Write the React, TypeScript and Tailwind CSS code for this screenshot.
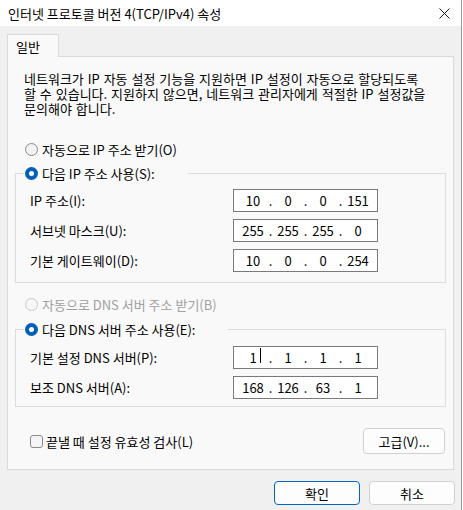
import React from "react";

function Radio({ checked, disabled }: { checked?: boolean; disabled?: boolean }) {
  if (checked) {
    return (
      <span className="flex h-[13px] w-[13px] shrink-0 items-center justify-center rounded-full bg-[#005fb8]">
        <span className="h-[5px] w-[5px] rounded-full bg-white" />
      </span>
    );
  }
  return (
    <span
      className={
        disabled
          ? "h-[13px] w-[13px] shrink-0 rounded-full border border-[#c8c8c8] bg-[#f7f7f7]"
          : "h-[13px] w-[13px] shrink-0 rounded-full border border-[#8a8a8a] bg-[#f3f3f3]"
      }
    />
  );
}

function IpField({ parts, caret }: { parts: string[]; caret?: boolean }) {
  return (
    <div className="flex h-[23px] w-[145px] items-center border border-[#7a7a7a] bg-white pl-[5px]">
      {parts.map((p, i) => (
        <React.Fragment key={i}>
          <span className="w-[28px] text-center">
            <span className="relative">
              {p}
              {caret && i === 0 && (
                <span className="absolute right-[-4px] top-[0px] h-[15px] w-px bg-black" />
              )}
            </span>
          </span>
          {i < 3 && <span className="w-[7px] text-center">.</span>}
        </React.Fragment>
      ))}
    </div>
  );
}

function Row({ label, parts, caret }: { label: string; parts: string[]; caret?: boolean }) {
  return (
    <div className="flex h-[23px] items-center">
      <span className="w-[217px] pl-[14px]">{label}</span>
      <IpField parts={parts} caret={caret} />
    </div>
  );
}

export default function App() {
  return (
    <div className="relative h-[510px] w-[463px] overflow-hidden bg-white font-['Noto_Sans_CJK_KR',sans-serif] text-[13px] leading-[15px] text-black">
      <div className="h-full w-[462px] border-r border-[#9a9a9a] bg-[#f0f0f0]">
        {/* title bar */}
        <div className="flex h-[26px] items-center justify-between bg-white pl-[8px] pr-[10px]">
          <span>인터넷 프로토콜 버전 4(TCP/IPv4) 속성</span>
          <svg width="11" height="11" viewBox="0 0 11 11" className="mr-[1px]">
            <path d="M0.5 0.5 L10.5 10.5 M10.5 0.5 L0.5 10.5" stroke="#1a1a1a" strokeWidth="1" fill="none" />
          </svg>
        </div>

        <div className="pt-[8px]">
          {/* tab */}
          <div className="relative z-10 mb-[-1px] ml-[7px] flex h-[23px] w-[52px] items-center border border-b-0 border-[#d9d9d9] bg-[#f9f9f9] pl-[8px]">
            일반
          </div>

          {/* panel */}
          <div className="ml-[7px] flex h-[414px] w-[447px] flex-col border border-[#d9d9d9] bg-[#f9f9f9]">
            <p className="pl-[16px] pt-[14px] [word-spacing:1px]">
              네트워크가 IP 자동 설정 기능을 지원하면 IP 설정이 자동으로 할당되도록
              <br />
              할 수 있습니다. 지원하지 않으면, 네트워크 관리자에게 적절한 IP 설정값을
              <br />
              문의해야 합니다.
            </p>

            <div className="mt-[25px] flex h-[16px] items-center gap-[4px] pl-[17px]">
              <Radio />
              <span>자동으로 IP 주소 받기(O)</span>
            </div>

            <fieldset className="mx-[7px] mt-[8px] border border-[#dcdcdc] px-0 pb-[10px]">
              <legend className="ml-[8px] flex h-[16px] items-center gap-[4px] pl-[1px] pr-[33px]">
                <Radio checked />
                <span>다음 IP 주소 사용(S):</span>
              </legend>
              <div className="flex flex-col gap-[7px] pt-[8px]">
                <Row label="IP 주소(I):" parts={["10", "0", "0", "151"]} />
                <Row label="서브넷 마스크(U):" parts={["255", "255", "255", "0"]} />
                <Row label="기본 게이트웨이(D):" parts={["10", "0", "0", "254"]} />
              </div>
            </fieldset>

            <div className="mt-[13px] flex h-[16px] items-center gap-[4px] pl-[17px] text-[#a0a0a0]">
              <Radio disabled />
              <span>자동으로 DNS 서버 주소 받기(B)</span>
            </div>

            <fieldset className="mx-[7px] mt-[9px] border border-[#dcdcdc] px-0 pb-[7px]">
              <legend className="ml-[8px] flex h-[16px] items-center gap-[4px] pl-[1px] pr-[33px]">
                <Radio checked />
                <span>다음 DNS 서버 주소 사용(E):</span>
              </legend>
              <div className="flex flex-col gap-[7px] pt-[9px]">
                <Row label="기본 설정 DNS 서버(P):" parts={["1", "1", "1", "1"]} caret />
                <Row label="보조 DNS 서버(A):" parts={["168", "126", "63", "1"]} />
              </div>
            </fieldset>

            <div className="mt-[21px] flex h-[26px] items-center justify-between pl-[22px] pr-[8px]">
              <div className="flex items-center gap-[3px]">
                <span className="h-[13px] w-[13px] rounded-[3px] border border-[#8a8a8a] bg-[#f5f5f5]" />
                <span>끝낼 때 설정 유효성 검사(L)</span>
              </div>
              <button className="flex h-[26px] w-[82px] items-center justify-center rounded-[4px] border border-[#d0d0d0] bg-[#fdfdfd]">
                고급(V)...
              </button>
            </div>
          </div>

          {/* bottom buttons */}
          <div className="mt-[11px] flex justify-end gap-[9px] pr-[6px]">
            <button className="flex h-[24px] w-[86px] items-center justify-center rounded-[4px] border border-[#0067c0] bg-[#fdfdfd]">
              확인
            </button>
            <button className="flex h-[24px] w-[86px] items-center justify-center rounded-[4px] border border-[#d0d0d0] bg-[#fdfdfd]">
              취소
            </button>
          </div>
        </div>
      </div>
    </div>
  );
}
